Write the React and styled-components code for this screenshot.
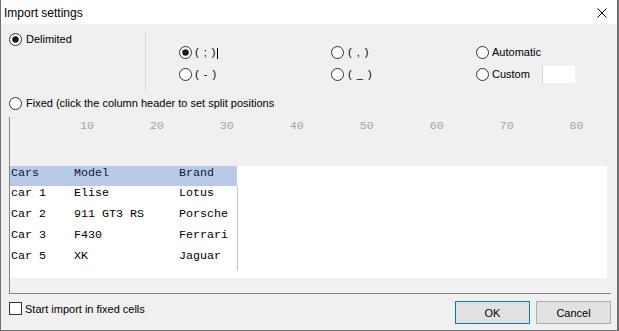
import React from 'react';
import styled, { createGlobalStyle } from 'styled-components';

const Global = createGlobalStyle`
  html, body { margin: 0; padding: 0; background: #ffffff; }
  body { font-family: "Liberation Sans", Arial, sans-serif; }
  * { box-sizing: border-box; }
`;

const Window = styled.div`
  width: 619px;
  height: 331px;
  display: flex;
  flex-direction: column;
  background: #f0f0f0;
  border-left: 1px solid #707070;
  border-right: 2px solid #707070;
  border-bottom: 1px solid #707070;
  color: #000;
  font-size: 11px;
`;

const TitleBar = styled.div`
  height: 24px;
  flex: none;
  background: #ffffff;
  display: flex;
  align-items: center;
  justify-content: space-between;
  padding: 2px 10px 0 3px;
`;

const Title = styled.span`
  font-size: 12px;
`;

const CloseIcon = styled.svg`
  display: block;
  margin-top: -1px;
`;

const Body = styled.div`
  flex: 1;
  display: flex;
  flex-direction: column;
  padding: 0 6px 0 8px;
`;

const TopSection = styled.div`
  display: flex;
  margin-top: 8px;
  height: 58px;
`;

const LeftCol = styled.div`
  width: 136px;
  padding-top: 1px;
`;

const Separator = styled.div`
  width: 1px;
  background: #d8d8d8;
`;

const OptionsGrid = styled.div`
  margin-left: 33px;
  padding-top: 14px;
  display: grid;
  grid-template-columns: 152px 145px 1fr;
  grid-auto-rows: 13px;
  row-gap: 9px;
  align-items: center;
`;

const Option = styled.label`
  display: flex;
  align-items: center;
  gap: ${(p) => p.$gap || 3}px;
  height: 13px;
  white-space: nowrap;
  line-height: 13px;
`;

const SepText = styled.span`
  letter-spacing: 1px;
  white-space: pre;
`;

const RadioSvg = styled.svg`
  display: block;
  flex: none;
`;

const Caret = styled.span`
  display: inline-block;
  width: 1px;
  height: 11px;
  background: #000;
  vertical-align: middle;
`;

const CustomInput = styled.div`
  width: 33px;
  height: 17px;
  background: #ffffff;
  border-left: 1px solid #cfcfcf;
  margin-left: 9px;
  flex: none;
`;

const FixedRow = styled.div`
  margin-top: 7px;
`;

const Frame = styled.div`
  margin-top: 7px;
  width: 602px;
  height: 177px;
  border-left: 1px solid #848484;
  border-bottom: 1px solid #848484;
  display: flex;
  flex-direction: column;
`;

const Ruler = styled.div`
  height: 49px;
  flex: none;
  padding-top: 2px;
  font-family: "Liberation Mono", "Courier New", monospace;
  font-size: 11.67px;
  line-height: 14px;
  color: #a4a4a4;
  white-space: pre;
`;

const DataArea = styled.div`
  width: 597px;
  height: 112px;
  background: #ffffff;
`;

const Table = styled.div`
  width: 228px;
  font-family: "Liberation Mono", "Courier New", monospace;
  font-size: 11.67px;
  line-height: 14px;
`;

const Row = styled.div`
  display: flex;
  padding-left: 1px;
  height: ${(p) => (p.$header ? 20 : 21)}px;
  background: ${(p) => (p.$header ? '#b7cbe9' : 'transparent')};
  margin-right: ${(p) => (p.$header ? 1 : 0)}px;
  border-right: ${(p) => (p.$header ? 'none' : '1px solid #c4c4c4')};
  color: ${(p) => (p.$header ? '#10163a' : '#000')};
  white-space: pre;
`;

const Cell = styled.span`
  flex: none;
  width: ${(p) => (p.$w ? `${p.$w}px` : 'auto')};
`;

const BottomBar = styled.div`
  margin-top: 7px;
  height: 23px;
  display: flex;
  align-items: flex-start;
`;

const CheckLabel = styled.label`
  display: flex;
  align-items: center;
  gap: 3px;
  margin-top: 1px;
  height: 13px;
`;

const CheckBox = styled.span`
  width: 13px;
  height: 13px;
  border: 1px solid #333;
  background: #fff;
  flex: none;
`;

const Buttons = styled.div`
  margin-left: auto;
  display: flex;
  gap: 6px;
`;

const Button = styled.button`
  width: 75px;
  height: 23px;
  padding: 0;
  background: #e1e1e1;
  border: 1px solid ${(p) => (p.$primary ? '#0078d7' : '#adadad')};
  font-family: "Liberation Sans", Arial, sans-serif;
  font-size: 11px;
  color: #000;
`;

const Radio = ({ checked }) => (
  <RadioSvg width="13" height="13" viewBox="0 0 13 13">
    <circle cx="6.5" cy="6.5" r="6" fill="#fff" stroke="#333" strokeWidth="1" />
    {checked && <circle cx="6.5" cy="6.5" r="3.2" fill="#1a1a1a" />}
  </RadioSvg>
);

const rulerText =
  ' '.repeat(10) +
  ['10', '20', '30', '40', '50', '60', '70', '80'].join(' '.repeat(8));

const rows = [
  ['car 1', 'Elise', 'Lotus'],
  ['Car 2', '911 GT3 RS', 'Porsche'],
  ['Car 3', 'F430', 'Ferrari'],
  ['Car 5', 'XK', 'Jaguar'],
];

export default function App() {
  return (
    <>
      <Global />
      <Window>
        <TitleBar>
          <Title>Import settings</Title>
          <CloseIcon width="10" height="10" viewBox="0 0 10 10">
            <path d="M0.5 0.5 L9.5 9.5 M9.5 0.5 L0.5 9.5" stroke="#000" strokeWidth="1" fill="none" />
          </CloseIcon>
        </TitleBar>
        <Body>
          <TopSection>
            <LeftCol>
              <Option $gap={4}>
                <Radio checked />
                <span>Delimited</span>
              </Option>
            </LeftCol>
            <Separator />
            <OptionsGrid>
              <Option>
                <Radio checked />
                <SepText>( ; )<Caret /></SepText>
              </Option>
              <Option $gap={4}>
                <Radio />
                <SepText>( , )</SepText>
              </Option>
              <Option>
                <Radio />
                <span>Automatic</span>
              </Option>
              <Option>
                <Radio />
                <SepText>( - )</SepText>
              </Option>
              <Option $gap={4}>
                <Radio />
                <SepText>( _ )</SepText>
              </Option>
              <Option>
                <Radio />
                <span>Custom</span>
                <CustomInput />
              </Option>
            </OptionsGrid>
          </TopSection>
          <FixedRow>
            <Option $gap={4}>
              <Radio />
              <span>Fixed (click the column header to set split positions</span>
            </Option>
          </FixedRow>
          <Frame>
            <Ruler>{rulerText}</Ruler>
            <DataArea>
              <Table>
                <Row $header>
                  <Cell $w={63}>Cars</Cell>
                  <Cell $w={105}>Model</Cell>
                  <Cell>Brand</Cell>
                </Row>
                {rows.map((r) => (
                  <Row key={r[0]}>
                    <Cell $w={63}>{r[0]}</Cell>
                    <Cell $w={105}>{r[1]}</Cell>
                    <Cell>{r[2]}</Cell>
                  </Row>
                ))}
              </Table>
            </DataArea>
          </Frame>
          <BottomBar>
            <CheckLabel>
              <CheckBox />
              <span>Start import in fixed cells</span>
            </CheckLabel>
            <Buttons>
              <Button $primary>OK</Button>
              <Button>Cancel</Button>
            </Buttons>
          </BottomBar>
        </Body>
      </Window>
    </>
  );
}
